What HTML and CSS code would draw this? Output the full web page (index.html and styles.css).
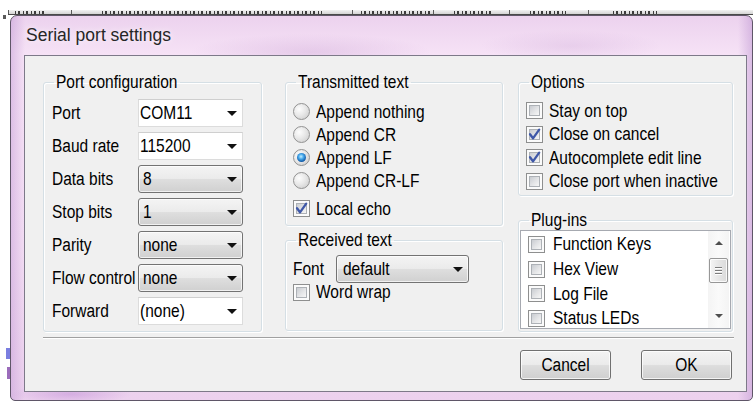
FILE: index.html
```html
<!DOCTYPE html>
<html>
<head>
<meta charset="utf-8">
<title>Serial port settings</title>
<link rel="stylesheet" href="styles.css">
</head>
<body>
  <div class="behind">
    <div class="strip">
      <i class="frag f1"></i>
      <i class="frag f2"></i>
      <i class="frag f3"></i>
      <i class="frag f4"></i>
      <i class="frag f5"></i>
      <i class="frag f6"></i>
    </div>
  </div>

  <div class="desk">
    <div class="gutter"></div>
    <div class="window">
      <div class="titlebar">Serial port settings</div>

      <div class="client">
        <div class="groups">

          <fieldset class="group port">
            <legend><span class="tx">Port configuration</span></legend>
            <div class="port-body">
              <div class="field"><span class="label"><span class="tx">Port</span></span><div class="combo edit"><span class="value"><span class="tx">COM11</span></span><i class="arrow"></i></div></div>
              <div class="field"><span class="label"><span class="tx">Baud rate</span></span><div class="combo edit"><span class="value"><span class="tx">115200</span></span><i class="arrow"></i></div></div>
              <div class="field"><span class="label"><span class="tx">Data bits</span></span><div class="combo drop"><span class="value"><span class="tx">8</span></span><i class="arrow"></i></div></div>
              <div class="field"><span class="label"><span class="tx">Stop bits</span></span><div class="combo drop"><span class="value"><span class="tx">1</span></span><i class="arrow"></i></div></div>
              <div class="field"><span class="label"><span class="tx">Parity</span></span><div class="combo drop"><span class="value"><span class="tx">none</span></span><i class="arrow"></i></div></div>
              <div class="field"><span class="label"><span class="tx">Flow control</span></span><div class="combo drop"><span class="value"><span class="tx">none</span></span><i class="arrow"></i></div></div>
              <div class="field"><span class="label"><span class="tx">Forward</span></span><div class="combo edit"><span class="value"><span class="tx">(none)</span></span><i class="arrow"></i></div></div>
            </div>
          </fieldset>

          <div class="col2">
            <fieldset class="group transmitted">
              <legend><span class="tx">Transmitted text</span></legend>
              <div class="tx-body">
                <div class="opt radio"><span class="rb"></span><span class="tx">Append nothing</span></div>
                <div class="opt radio"><span class="rb"></span><span class="tx">Append CR</span></div>
                <div class="opt radio"><span class="rb on"></span><span class="tx">Append LF</span></div>
                <div class="opt radio"><span class="rb"></span><span class="tx">Append CR-LF</span></div>
                <div class="opt radio echo"><span class="cb on"><svg viewBox="0 0 17 17"><path d="M4 8.2 L7 12.3 L13.2 3.6"/></svg></span><span class="tx">Local echo</span></div>
              </div>
            </fieldset>

            <fieldset class="group received">
              <legend><span class="tx">Received text</span></legend>
              <div class="rx-body">
                <div class="font-row"><span class="font-label"><span class="tx">Font</span></span><div class="combo drop font"><span class="value"><span class="tx">default</span></span><i class="arrow"></i></div></div>
                <div class="opt wrap"><span class="cb"></span><span class="tx">Word wrap</span></div>
              </div>
            </fieldset>
          </div>

          <div class="col3">
            <fieldset class="group options">
              <legend><span class="tx">Options</span></legend>
              <div class="opt-body">
                <div class="opt check"><span class="cb"></span><span class="tx">Stay on top</span></div>
                <div class="opt check"><span class="cb on"><svg viewBox="0 0 17 17"><path d="M4 8.2 L7 12.3 L13.2 3.6"/></svg></span><span class="tx">Close on cancel</span></div>
                <div class="opt check"><span class="cb on"><svg viewBox="0 0 17 17"><path d="M4 8.2 L7 12.3 L13.2 3.6"/></svg></span><span class="tx">Autocomplete edit line</span></div>
                <div class="opt check"><span class="cb"></span><span class="tx">Close port when inactive</span></div>
              </div>
            </fieldset>

            <fieldset class="group plugins">
              <legend><span class="tx">Plug-ins</span></legend>
              <div class="plug-body">
                <div class="listbox">
                  <div class="items">
                    <div class="item"><span class="cb"></span><span class="tx">Function Keys</span></div>
                    <div class="item"><span class="cb"></span><span class="tx">Hex View</span></div>
                    <div class="item"><span class="cb"></span><span class="tx">Log File</span></div>
                    <div class="item"><span class="cb"></span><span class="tx">Status LEDs</span></div>
                  </div>
                  <div class="scrollbar">
                    <div class="sb-btn"><i class="up"></i></div>
                    <div class="thumb"><i></i><i></i><i></i></div>
                    <div class="sb-track"></div>
                    <div class="sb-btn"><i class="down"></i></div>
                  </div>
                </div>
              </div>
            </fieldset>
          </div>

        </div>

        <div class="separator"></div>

        <div class="buttons">
          <button class="btn"><span class="tx">Cancel</span></button>
          <button class="btn"><span class="tx">OK</span></button>
        </div>
      </div>
    </div>
  </div>
</body>
</html>
```

FILE: styles.css
```css
html, body {
  margin: 0;
  padding: 0;
}

body {
  width: 753px;
  height: 401px;
  overflow: hidden;
  background: #ffffff;
  font-family: "Liberation Sans", Arial, sans-serif;
  font-size: 15.5px;
  color: #000;
}

/* dialog text is drawn a little taller than the stock face */
.tx {
  display: inline-block;
  transform: scaleY(1.15);
  white-space: nowrap;
}

/* the application window that sits underneath the dialog */
.behind {
  height: 15px;
  display: flex;
  flex-direction: column;
}

.strip {
  margin-top: 10px;
  margin-left: 8px;
  height: 5px;
  box-sizing: border-box;
  border-bottom: 1px solid #4a4a4a;
  background: linear-gradient(180deg, #f2f2f2, #d4d4d4);
  display: flex;
  align-items: stretch;
}

.frag {
  display: block;
  border-left: 1px solid #5a5a5a;
  background:
    repeating-linear-gradient(90deg, #3c3c3c 0 1px, transparent 1px 3px, #3c3c3c 3px 5px, transparent 5px 8px)
    left bottom / var(--w) 3px no-repeat;
  background-position: var(--x) bottom;
}

.f1 { width: 62px; --w: 30px; --x: 6px; }
.f2 { width: 280px; --w: 220px; --x: 30px; }
.f3 { width: 80px; --w: 72px; --x: 8px; }
.f4 { width: 75px; --w: 40px; --x: 20px; }
.f5 { width: 78px; --w: 36px; --x: 20px; }
.f6 { width: 90px; --w: 44px; --x: 24px; }

.desk {
  display: flex;
}

.gutter {
  width: 10px;
  height: 386px;
  flex: none;
  background:
    linear-gradient(#7a7ee0, #7a7ee0) 6px 333px / 4px 11px no-repeat,
    linear-gradient(#9b6cbb, #9b6cbb) 7px 352px / 3px 12px no-repeat,
    linear-gradient(#5a5a5a, #5a5a5a) 3px 0 / 3px 4px no-repeat;
}

/* Aero-style glass frame */
.window {
  width: 743px;
  height: 386px;
  flex: none;
  box-sizing: border-box;
  border: 1px solid #5f5668;
  border-radius: 7px 7px 5px 5px;
  background:
    radial-gradient(ellipse 120px 18px at 300px 36px, rgba(200, 160, 210, 0.35), transparent),
    radial-gradient(ellipse 90px 16px at 560px 30px, rgba(205, 170, 215, 0.3), transparent),
    radial-gradient(ellipse 60px 10px at 60px 378px, rgba(185, 130, 210, 0.45), transparent),
    linear-gradient(90deg, rgba(190, 150, 210, 0.45) 0, transparent 14px, transparent 727px, rgba(190, 150, 210, 0.5) 741px),
    linear-gradient(180deg, #ecd2ee 0%, #f6e2f6 10%, #f4def4 60%, #ecd1ee 100%);
  display: flex;
  flex-direction: column;
}

.titlebar {
  height: 39px;
  box-sizing: border-box;
  padding: 9px 0 0 15px;
  font-size: 17.5px;
  line-height: 20px;
  color: #262626;
  text-shadow: 0 0 6px rgba(255, 255, 255, 0.9);
}

.client {
  margin: 0 5px 0 13px;
  height: 337px;
  box-sizing: border-box;
  border: 1px solid #7d7989;
  background: #f0f0f0;
  padding: 16px 0 0 18px;
}

.groups {
  display: flex;
  align-items: flex-start;
}

/* group boxes */
.group {
  margin: 0;
  padding: 0;
  min-width: 0;
  box-sizing: border-box;
  border: 1px solid #d5dfe5;
  border-radius: 3px;
  box-shadow: inset 1px 1px 0 #ffffff, 1px 1px 0 #ffffff;
}

.group legend {
  margin-left: 10px;
  padding: 0 2px;
  height: 20px;
  line-height: 20px;
}

.port {
  width: 219px;
  height: 260px;
}

.port-body {
  padding: 7px 0 0 8px;
}

.field {
  display: flex;
  align-items: center;
  height: 28px;
  margin-bottom: 5px;
}

.label {
  width: 86px;
  flex: none;
  line-height: 20px;
  white-space: nowrap;
}

/* combo boxes */
.combo {
  width: 105px;
  height: 28px;
  box-sizing: border-box;
  display: flex;
  align-items: center;
  padding: 0 5px 0 4px;
  flex: none;
}

.combo .value {
  flex: 1;
  line-height: 20px;
  white-space: nowrap;
}

.combo .arrow {
  width: 0;
  height: 0;
  border-left: 5px solid transparent;
  border-right: 5px solid transparent;
  border-top: 5px solid #111;
  flex: none;
}

.combo.edit {
  padding-left: 1px;
  background: #ffffff;
  border: 1px solid #dcdcdc;
  border-top-color: #cfcfcf;
}

.combo.drop {
  border: 1px solid #737373;
  border-radius: 3px;
  background: linear-gradient(180deg, #f4f4f4 0%, #ebebeb 48%, #dedede 52%, #d0d0d0 100%);
  box-shadow: inset 0 0 0 1px rgba(255, 255, 255, 0.7);
}

.col2 {
  margin-left: 23px;
  width: 218px;
  display: flex;
  flex-direction: column;
}

.col3 {
  margin-left: 15px;
  width: 215px;
  display: flex;
  flex-direction: column;
}

.transmitted {
  width: 218px;
  height: 154px;
}

.tx-body {
  padding: 8px 0 0 7px;
}

.opt {
  display: flex;
  align-items: center;
  gap: 6px;
  white-space: nowrap;
  line-height: 20px;
}

.opt.radio {
  height: 23px;
}

.opt.echo {
  margin-top: 5px;
}

.received {
  margin-top: 4px;
  width: 218px;
  height: 101px;
}

.rx-body {
  padding: 5px 0 0 7px;
}

.font-row {
  display: flex;
  align-items: center;
  height: 28px;
}

.font-label {
  width: 43px;
  line-height: 20px;
}

.combo.font {
  width: 133px;
  padding-left: 6px;
}

.opt.wrap {
  height: 18px;
}

.options {
  width: 215px;
  height: 124px;
}

.opt-body {
  padding: 7px 0 0 7px;
}

.opt.check {
  height: 23.5px;
}

.plugins {
  margin-top: 14px;
  width: 215px;
  height: 122px;
}

.plug-body {
  padding: 0 1px;
}

.listbox {
  height: 99px;
  box-sizing: border-box;
  border: 1px solid #a6a9b0;
  background: #ffffff;
  display: flex;
  overflow: hidden;
}

.items {
  flex: 1;
  padding: 1px 0 0 7px;
}

.item {
  height: 24.7px;
  display: flex;
  align-items: center;
  gap: 8px;
  line-height: 20px;
  white-space: nowrap;
}

/* list scrollbar */
.scrollbar {
  width: 21px;
  margin-right: 1px;
  display: flex;
  flex-direction: column;
  align-items: center;
  background: linear-gradient(90deg, #f4f4f4, #fafafa 50%, #f4f4f4);
}

.sb-btn {
  height: 24px;
  width: 100%;
  display: flex;
  align-items: center;
  justify-content: center;
  flex: none;
}

.sb-btn .up,
.sb-btn .down {
  width: 0;
  height: 0;
  border-left: 4px solid transparent;
  border-right: 4px solid transparent;
}

.sb-btn .up {
  border-bottom: 4px solid #4f4f4f;
}

.sb-btn .down {
  border-top: 4px solid #4f4f4f;
}

.thumb {
  margin-top: 3px;
  width: 19px;
  height: 25px;
  box-sizing: border-box;
  border: 1px solid #979797;
  border-radius: 2px;
  background: linear-gradient(90deg, #f5f5f5, #e6e6e6 50%, #dadada);
  box-shadow: inset 0 0 0 1px rgba(255, 255, 255, 0.8);
  display: flex;
  flex-direction: column;
  align-items: center;
  justify-content: center;
  gap: 2px;
  flex: none;
}

.thumb i {
  display: block;
  width: 7px;
  height: 1px;
  background: #7c7c7c;
  box-shadow: 0 1px 0 #ffffff;
}

.sb-track {
  flex: 1;
}

/* check boxes */
.cb {
  position: relative;
  width: 17px;
  height: 17px;
  flex: none;
  box-sizing: border-box;
  border: 1px solid #8e8f8f;
  background: #fbfbfb;
  padding: 2px;
}

.cb::before {
  content: "";
  display: block;
  width: 100%;
  height: 100%;
  box-sizing: border-box;
  border: 1px solid #adb1b6;
  background: linear-gradient(135deg, #c9ccd1 0%, #e4e5e7 55%, #f6f6f6 100%);
}

.cb svg {
  position: absolute;
  left: -1px;
  top: -1px;
  width: 17px;
  height: 17px;
}

.cb svg path {
  fill: none;
  stroke: #3f58a8;
  stroke-width: 2.3;
  stroke-linecap: round;
  stroke-linejoin: round;
}

/* radio buttons */
.rb {
  width: 17px;
  height: 17px;
  flex: none;
  box-sizing: border-box;
  border-radius: 50%;
  border: 1px solid #929292;
  background: radial-gradient(circle at 35% 35%, #fdfdfd 0%, #e8e8e8 45%, #c8c8c8 100%);
  display: flex;
  align-items: center;
  justify-content: center;
}

.rb.on::after {
  content: "";
  width: 9px;
  height: 9px;
  border-radius: 50%;
  background: radial-gradient(circle at 45% 40%, #c2efff 0%, #44a6ea 35%, #0c4f9c 75%, #0a3b78 100%);
}

/* footer */
.separator {
  margin-top: 5px;
  width: 691px;
  border-top: 1px solid #a0a0a0;
  border-bottom: 1px solid #ffffff;
}

.buttons {
  margin-top: 11px;
  width: 691px;
  box-sizing: border-box;
  padding-right: 2px;
  display: flex;
  justify-content: flex-end;
  gap: 30px;
}

.btn {
  width: 91px;
  height: 30px;
  margin: 0;
  padding: 0;
  box-sizing: border-box;
  border: 1px solid #707070;
  border-radius: 3px;
  background: linear-gradient(180deg, #f3f3f3 0%, #ebebeb 48%, #dddddd 52%, #cfcfcf 100%);
  box-shadow: inset 0 0 0 1px rgba(255, 255, 255, 0.75);
  font-family: inherit;
  font-size: 15.5px;
  color: #000;
}
```
